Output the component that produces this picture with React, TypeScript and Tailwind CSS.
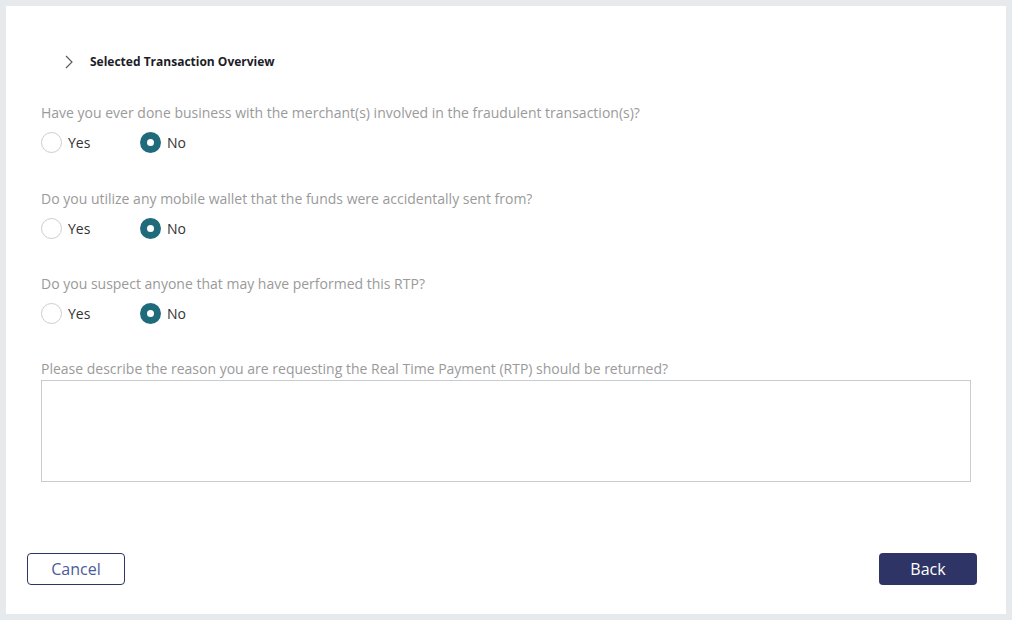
import React from "react";

function Radio({ checked, label }: { checked: boolean; label: string }) {
  return (
    <div className="flex items-center">
      {checked ? (
        <span className="w-[21px] h-[21px] rounded-full bg-[#1f6b7c] flex items-center justify-center">
          <span className="w-[7px] h-[7px] rounded-full bg-white" />
        </span>
      ) : (
        <span className="w-[21px] h-[21px] rounded-full border border-[#c9ced3] bg-white" />
      )}
      <span className="ml-[6px] text-[14px] text-[#333] leading-[20px]">{label}</span>
    </div>
  );
}

function Question({ text }: { text: string }) {
  return (
    <div>
      <div className="text-[14px] leading-[20px] text-[#9a9a9a]">{text}</div>
      <div className="flex items-center mt-[9px] h-[21px]">
        <div className="w-[99px]">
          <Radio checked={false} label="Yes" />
        </div>
        <Radio checked={true} label="No" />
      </div>
    </div>
  );
}

export default function App() {
  return (
    <div
      className="w-[1012px] h-[620px] bg-[#e6eaec] p-[6px]"
      style={{ fontFamily: '"Open Sans", sans-serif' }}
    >
      <div className="bg-white w-[1000px] h-[608px] flex flex-col">
        <div className="flex items-center mt-[44px] ml-[58px] h-[24px]">
          <svg width="10" height="14" viewBox="0 0 10 14">
            <path d="M2 1 L8 7 L2 13" fill="none" stroke="#555" strokeWidth="1.1" />
          </svg>
          <span className="ml-[16px] text-[12px] font-bold text-[#1c1c28]">
            Selected Transaction Overview
          </span>
        </div>
        <div className="ml-[35px] mr-[36px] mt-[29px] flex flex-col">
          <Question text="Have you ever done business with the merchant(s) involved in the fraudulent transaction(s)?" />
          <div className="mt-[36px]">
            <Question text="Do you utilize any mobile wallet that the funds were accidentally sent from?" />
          </div>
          <div className="mt-[35px]">
            <Question text="Do you suspect anyone that may have performed this RTP?" />
          </div>
          <div className="mt-[35px]">
            <div className="text-[14px] leading-[20px] text-[#9a9a9a]">
              Please describe the reason you are requesting the Real Time Payment (RTP) should be returned?
            </div>
            <textarea className="mt-[1px] w-[930px] h-[102px] border border-[#c8ccd1] resize-none block outline-none" />
          </div>
        </div>
        <div className="flex justify-between mt-[71px] ml-[21px] mr-[29px]">
          <button className="w-[98px] h-[32px] border border-[#2c3566] rounded-[4px] text-[16px] text-[#4a5a9a] bg-white">
            Cancel
          </button>
          <button className="w-[98px] h-[32px] rounded-[4px] text-[16px] text-white bg-[#2e3566]">
            Back
          </button>
        </div>
      </div>
    </div>
  );
}
